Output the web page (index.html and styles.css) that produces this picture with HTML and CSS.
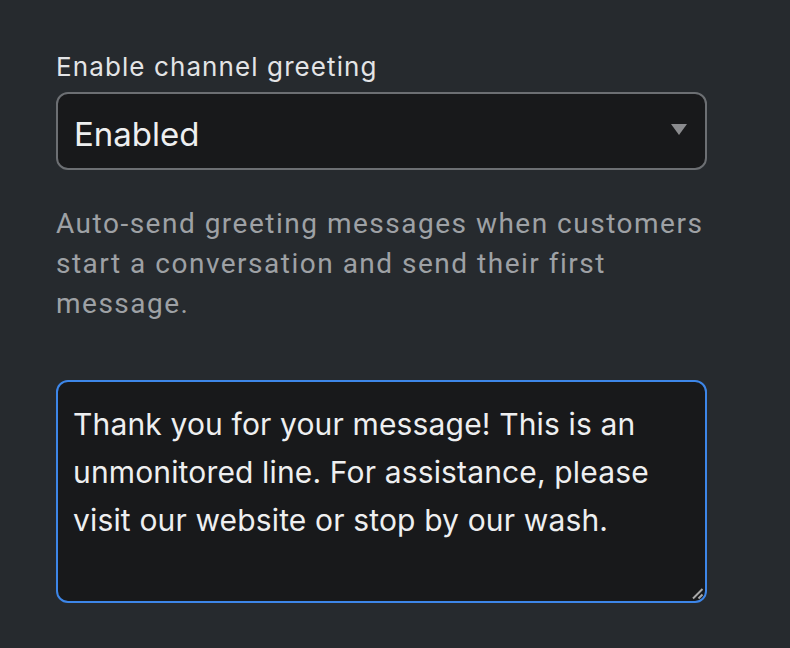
FILE: index.html
```html
<!DOCTYPE html>
<html>
<head>
<meta charset="utf-8">
<link rel="stylesheet" href="styles.css">
</head>
<body>
<div class="panel">
  <div class="field">
    <label class="label">Enable channel greeting</label>
    <div class="select">
      <span class="select-value">Enabled</span>
      <span class="caret"></span>
    </div>
  </div>
  <p class="help">Auto-send greeting messages when customers start a conversation and send their first message.</p>
  <div class="textarea">
    <div class="textarea-text">Thank you for your message! This is an unmonitored line. For assistance, please visit our website or stop by our wash.</div>
    <svg class="grip" width="14" height="14" viewBox="0 0 14 14"><path d="M12.5 3 L3 12.5 M12.5 8.5 L8.5 12.5" stroke="#a8a8a8" stroke-width="2"/></svg>
  </div>
</div>
</body>
</html>
```
FILE: styles.css
```css
html, body {
  margin: 0;
  padding: 0;
  background: #262a2e;
  width: 790px;
  height: 648px;
  overflow: hidden;
}
.panel {
  padding: 50px 83px 0 56px;
  display: flex;
  flex-direction: column;
}
.field {
  display: flex;
  flex-direction: column;
}
.label {
  font-family: Inter, sans-serif;
  font-size: 26px;
  line-height: 34px;
  letter-spacing: 1.1px;
  color: #e3e4e6;
  margin-bottom: 8px;
}
.select {
  box-sizing: border-box;
  height: 78px;
  border: 2px solid #6c6f73;
  border-radius: 12px;
  background: #18191b;
  display: flex;
  align-items: center;
  justify-content: space-between;
  padding: 0 18px 0 16px;
}
.select-value {
  font-family: Inter, sans-serif;
  font-size: 33px;
  color: #eeeff0;
  margin-top: 6px;
}
.caret {
  width: 0;
  height: 0;
  border-left: 8px solid transparent;
  border-right: 8px solid transparent;
  border-top: 11px solid #8a8b8e;
  margin-bottom: 4px;
}
.help {
  margin: 34px 0 0 0;
  font-family: Roboto, sans-serif;
  font-size: 28px;
  line-height: 40px;
  letter-spacing: 1.5px;
  color: #9ea1a5;
}
.textarea {
  position: relative;
  box-sizing: border-box;
  margin-top: 56px;
  height: 223px;
  border: 2px solid #3d86e8;
  border-radius: 12px;
  background: #18191b;
  padding: 18px 16px 18px 15px;
}
.textarea-text {
  font-family: Inter, sans-serif;
  font-size: 30px;
  line-height: 48px;
  letter-spacing: 0.15px;
  color: #eeeff0;
}
.grip {
  position: absolute;
  right: 1px;
  bottom: 1px;
}
```
